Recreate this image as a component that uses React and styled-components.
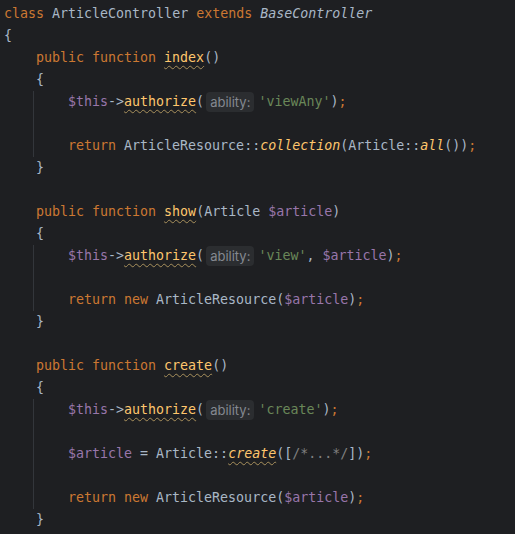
import React from 'react';
import styled, { createGlobalStyle } from 'styled-components';

const GlobalStyle = createGlobalStyle`
  html, body {
    margin: 0;
    padding: 0;
    background: #1e1f22;
  }
`;

const colors = {
  plain: '#a9b7c6',
  kw: '#cc7832',
  variable: '#9876aa',
  str: '#6a8759',
  fn: '#ffc66d',
  decl: '#ffc66d',
  cmt: '#808080',
};

const Editor = styled.div`
  width: 515px;
  height: 534px;
  box-sizing: border-box;
  padding: 3px 0 0 4px;
  background: #1e1f22;
  font-family: "DejaVu Sans Mono", "Liberation Mono", monospace;
  font-size: 13.3px;
  color: ${colors.plain};
  overflow: hidden;
`;

const Line = styled.div`
  height: 22px;
  line-height: 22px;
  white-space: pre;
  display: flex;
  align-items: center;
`;

const Indent = styled.div`
  padding-left: 32px;
`;

const Body = styled.div`
  margin-left: -3px;
  padding-left: 34px;
  border-left: 1px solid #33363b;
`;

const T = styled.span`
  color: ${({ $kind }) => colors[$kind || 'plain']};
  font-style: ${({ $italic }) => ($italic ? 'italic' : 'normal')};
  text-decoration: ${({ $wavy }) => ($wavy ? 'underline wavy #a8905c' : 'none')};
  text-decoration-thickness: 1px;
  text-underline-offset: 3px;
`;

const Hint = styled.span`
  display: inline-flex;
  align-items: center;
  height: 20px;
  margin: 0 4px 0 2px;
  padding: 0 4px;
  border-radius: 4px;
  background: #2b2d30;
  color: #858991;
  font-family: "Inter", "Noto Sans", sans-serif;
  font-size: 13px;
`;

const Empty = () => <Line />;

const Method = ({ name, children }) => (
  <>
    <Line>
      <T $kind="kw">public function </T>
      <T $kind="decl" $wavy>{name}</T>
      <T>()</T>
    </Line>
    <Line>{'{'}</Line>
    <Body>{children}</Body>
    <Line>{'}'}</Line>
  </>
);

const Authorize = ({ ability, extra }) => (
  <Line>
    <T $kind="variable">$this</T>
    <T>-&gt;</T>
    <T $kind="fn" $wavy>authorize</T>
    <T>(</T>
    <Hint>ability:</Hint>
    <T $kind="str">'{ability}'</T>
    {extra && (
      <>
        <T>, </T>
        <T $kind="variable">{extra}</T>
      </>
    )}
    <T>)</T>
    <T $kind="kw">;</T>
  </Line>
);

const ReturnNew = () => (
  <Line>
    <T $kind="kw">return new </T>
    <T>ArticleResource(</T>
    <T $kind="variable">$article</T>
    <T>)</T>
    <T $kind="kw">;</T>
  </Line>
);

const App = () => {
  return (
    <>
      <GlobalStyle />
      <Editor>
        <Line>
          <T $kind="kw">class </T>
          <T>ArticleController </T>
          <T $kind="kw">extends </T>
          <T $italic>BaseController</T>
        </Line>
        <Line>{'{'}</Line>
        <Indent>
          <Method name="index">
            <Authorize ability="viewAny" />
            <Empty />
            <Line>
              <T $kind="kw">return </T>
              <T>ArticleResource::</T>
              <T $kind="fn" $italic>collection</T>
              <T>(Article::</T>
              <T $kind="fn" $italic>all</T>
              <T>())</T>
              <T $kind="kw">;</T>
            </Line>
          </Method>
          <Empty />
          <Line>
            <T $kind="kw">public function </T>
            <T $kind="decl" $wavy>show</T>
            <T>(Article </T>
            <T $kind="variable">$article</T>
            <T>)</T>
          </Line>
          <Line>{'{'}</Line>
          <Body>
            <Authorize ability="view" extra="$article" />
            <Empty />
            <ReturnNew />
          </Body>
          <Line>{'}'}</Line>
          <Empty />
          <Method name="create">
            <Authorize ability="create" />
            <Empty />
            <Line>
              <T $kind="variable">$article</T>
              <T> = Article::</T>
              <T $kind="fn" $italic $wavy>create</T>
              <T>([</T>
              <T $kind="cmt">/*...*/</T>
              <T>])</T>
              <T $kind="kw">;</T>
            </Line>
            <Empty />
            <ReturnNew />
          </Method>
        </Indent>
      </Editor>
    </>
  );
};

export default App;
